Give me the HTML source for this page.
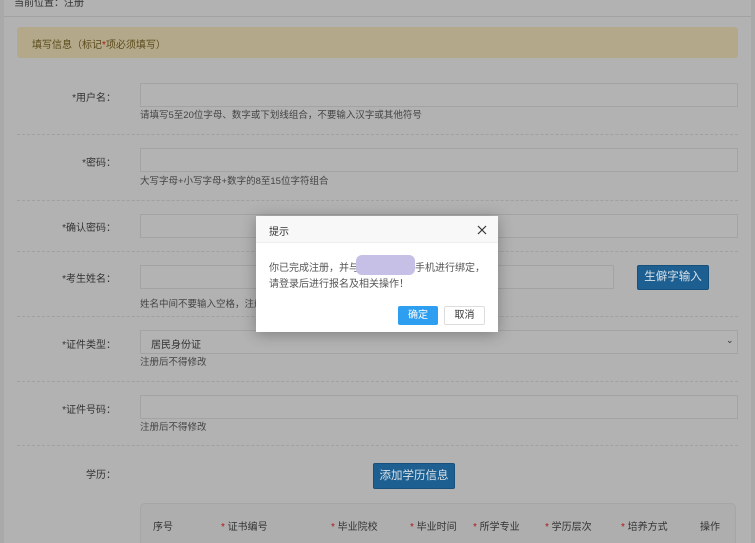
<!DOCTYPE html>
<html><head><meta charset="utf-8"><style>
*{margin:0;padding:0;box-sizing:border-box}
html,body{width:755px;height:543px;overflow:hidden}
body{background:#a9a9a9;font-family:"Liberation Sans","Noto Sans CJK SC",sans-serif;font-size:10px;color:#3a3a3a;position:relative}
.a{position:absolute}
.main{left:4px;top:0;width:747px;height:543px;background:#b2b2b2}
.inp{position:absolute;background:#b3b3b3;border:1px solid #a3a3a3;height:24px}
.lbl{position:absolute;width:116px;text-align:right;font-size:10px;color:#333;left:0}
.hint{position:absolute;left:140px;font-size:9.5px;color:#444}
.dash{position:absolute;left:17px;width:721px;border-top:1px dashed #a0a0a0}
.btn{position:absolute;background:#1d5f90;color:#d8e2ea;border:1px solid #17507a;border-radius:2px;font-size:11.5px;text-align:center}
.th{position:absolute;top:518px;font-size:10px;color:#333}
.th i{color:#b01818;font-style:normal}
</style></head><body>
<div class="a main"></div>
<div class="a" style="left:4px;top:16px;width:747px;border-top:1px solid #a2a2a2"></div>
<div class="a" style="left:14px;top:-6px;font-size:10px;color:#333">当前位置：注册</div>
<div class="a" style="left:17px;top:27px;width:721px;height:31px;background:#b3a98a;border-radius:3px"></div>
<div class="a" style="left:32px;top:36px;font-size:10px;color:#5a4a1a">填写信息（标记<span style="color:#b01818">*</span>项必须填写）</div>

<div class="lbl" style="top:89px">*用户名：</div>
<div class="inp" style="left:140px;top:83px;width:598px"></div>
<div class="hint" style="top:107px">请填写5至20位字母、数字或下划线组合，不要输入汉字或其他符号</div>
<div class="dash" style="top:134px"></div>

<div class="lbl" style="top:154px">*密码：</div>
<div class="inp" style="left:140px;top:148px;width:598px"></div>
<div class="hint" style="top:173px">大写字母+小写字母+数字的8至15位字符组合</div>
<div class="dash" style="top:200px"></div>

<div class="lbl" style="top:219px">*确认密码：</div>
<div class="inp" style="left:140px;top:214px;width:598px"></div>
<div class="dash" style="top:251px"></div>

<div class="lbl" style="top:270px">*考生姓名：</div>
<div class="inp" style="left:140px;top:265px;width:474px"></div>
<div class="hint" style="top:296px">姓名中间不要输入空格，注册</div>
<div class="btn" style="left:637px;top:265px;width:72px;height:25px;line-height:23px">生僻字输入</div>
<div class="dash" style="top:316px"></div>

<div class="lbl" style="top:336px">*证件类型：</div>
<div class="inp" style="left:140px;top:330px;width:598px"></div>
<div class="a" style="left:151px;top:336px;font-size:10px;color:#333">居民身份证</div>
<div class="a" style="left:726px;top:335px;font-size:9px;color:#333">⌄</div>
<div class="hint" style="top:354px">注册后不得修改</div>
<div class="dash" style="top:381px"></div>

<div class="lbl" style="top:401px">*证件号码：</div>
<div class="inp" style="left:140px;top:395px;width:598px"></div>
<div class="hint" style="top:419px">注册后不得修改</div>
<div class="dash" style="top:445px"></div>

<div class="lbl" style="top:466px">学历：</div>
<div class="btn" style="left:373px;top:463px;width:82px;height:26px;line-height:24px">添加学历信息</div>
<div class="a" style="left:140px;top:503px;width:596px;height:40px;background:#aeaeae;border:1px solid #a6a6a6;border-bottom:none;border-radius:5px 5px 0 0"></div>
<div class="th" style="left:153px">序号</div>
<div class="th" style="left:221px"><i>*</i> 证书编号</div>
<div class="th" style="left:331px"><i>*</i> 毕业院校</div>
<div class="th" style="left:410px"><i>*</i> 毕业时间</div>
<div class="th" style="left:473px"><i>*</i> 所学专业</div>
<div class="th" style="left:545px"><i>*</i> 学历层次</div>
<div class="th" style="left:621px"><i>*</i> 培养方式</div>
<div class="th" style="left:700px">操作</div>

<div class="a" style="left:256px;top:216px;width:242px;height:116px;background:#fff;box-shadow:0 2px 14px rgba(0,0,0,.3)"></div>
<div class="a" style="left:256px;top:216px;width:242px;height:27px;background:#f8f8f8;border-bottom:1px solid #eee"></div>
<div class="a" style="left:269px;top:223px;font-size:10px;color:#333">提示</div>
<svg class="a" style="left:477px;top:225px" width="10" height="10" viewBox="0 0 10 10"><path d="M1 1L9 9M9 1L1 9" stroke="#333" stroke-width="1.2"/></svg>
<div class="a" style="left:269px;top:259px;font-size:10px;color:#555">你已完成注册，并与</div>
<div class="a" style="left:356px;top:255px;width:59px;height:20px;background:#c6bfe6;border-radius:6px"></div>
<div class="a" style="left:415px;top:259px;font-size:10px;color:#555">手机进行绑定，</div>
<div class="a" style="left:269px;top:275px;font-size:10px;color:#555">请登录后进行报名及相关操作！</div>
<div class="a" style="left:398px;top:306px;width:40px;height:19px;background:#2d9ef0;color:#fff;font-size:10px;text-align:center;line-height:19px;border-radius:2px">确定</div>
<div class="a" style="left:444px;top:306px;width:41px;height:19px;background:#fff;border:1px solid #ddd;color:#333;font-size:10px;text-align:center;line-height:17px;border-radius:2px">取消</div>
</body></html>
